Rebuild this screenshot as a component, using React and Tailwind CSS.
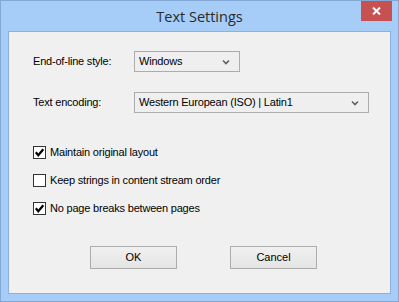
import React from "react";

const font = { fontFamily: '"Liberation Sans", Arial, sans-serif' };

const Chevron = () => (
  <svg width="8" height="6" viewBox="0 0 8 6" className="shrink-0">
    <path d="M1 1.5 L4 4.5 L7 1.5" fill="none" stroke="#606060" strokeWidth="1.6" />
  </svg>
);

const Select = ({ value, width }) => (
  <div
    className={`flex items-center justify-between h-[21px] ${width} border border-[#acacac] bg-[#efefef] pl-[4px] pr-[9px] text-[11px] tracking-[-0.2px] text-black`}
  >
    <span>{value}</span>
    <Chevron />
  </div>
);

const Checkbox = ({ checked, label }) => (
  <div className="flex items-center h-[13px] gap-[4px]">
    <div className="w-[13px] h-[13px] border border-[#333] bg-white flex items-center justify-center">
      {checked && (
        <svg width="11" height="11" viewBox="0 0 11 11">
          <path d="M1.8 5.2 L4.3 8.2 L9.3 2.2" fill="none" stroke="#000" strokeWidth="2.2" />
        </svg>
      )}
    </div>
    <span className="text-[11px] tracking-[-0.2px] text-black">{label}</span>
  </div>
);

const Button = ({ children }) => (
  <div className="w-[87px] h-[23px] border border-[#acacac] bg-gradient-to-b from-[#f0f0f0] to-[#e5e5e5] flex items-center justify-center text-[11px] text-black">
    {children}
  </div>
);

export default function App() {
  return (
    <div
      className="w-[399px] h-[302px] bg-[#a5cdf7] border border-[#84a8d6] flex flex-col"
      style={font}
    >
      {/* Title bar */}
      <div className="relative h-[30px] flex items-center justify-center">
        <span
          className="text-[14.5px] text-[#2b2b2b] mt-[2px]"
          style={{ fontFamily: '"Open Sans", "Noto Sans", sans-serif' }}
        >
          Text Settings
        </span>
        <div className="absolute right-[6px] top-0 w-[31px] h-[20px] bg-[#c75050] flex items-center justify-center">
          <svg width="9" height="8" viewBox="0 0 9 8">
            <path d="M1 0.5 L8 7.5 M8 0.5 L1 7.5" stroke="#fff" strokeWidth="2" />
          </svg>
        </div>
      </div>

      {/* Client area */}
      <div className="ml-[7px] w-[383px] h-[263px] border border-[#8db1dd] bg-[#f0f0f0] flex flex-col pl-[24px] pt-[19px]">
        <div className="flex items-center">
          <span className="w-[101px] text-[11px] tracking-[-0.2px] text-black">End-of-line style:</span>
          <Select value="Windows" width="w-[106px]" />
        </div>
        <div className="flex items-center mt-[20px]">
          <span className="w-[101px] text-[11px] tracking-[-0.2px] text-black">Text encoding:</span>
          <Select value="Western European (ISO) | Latin1" width="w-[235px]" />
        </div>

        <div className="flex flex-col gap-[15px] mt-[33px]">
          <Checkbox checked label="Maintain original layout" />
          <Checkbox label="Keep strings in content stream order" />
          <Checkbox checked label="No page breaks between pages" />
        </div>

        <div className="flex gap-[53px] ml-[57px] mt-[31px]">
          <Button>OK</Button>
          <Button>Cancel</Button>
        </div>
      </div>
    </div>
  );
}
